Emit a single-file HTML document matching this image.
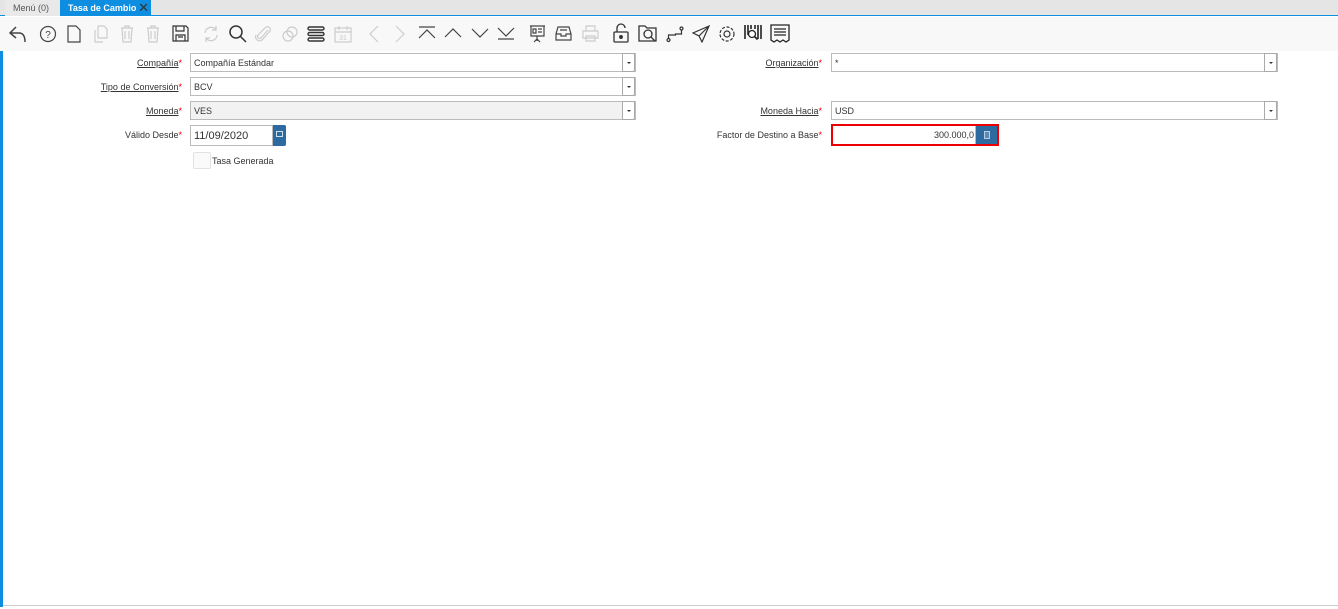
<!DOCTYPE html>
<html><head><meta charset="utf-8"><style>
*{box-sizing:border-box;margin:0;padding:0}
body{width:1338px;height:609px;background:#fff;font-family:"Liberation Sans",sans-serif;font-size:10px;color:#333;position:relative;overflow:hidden}
.tabs{position:absolute;left:0;top:0;width:1338px;height:16px;background:#e5e5e5;border-bottom:1px solid #0d8ee0}
.tab{position:absolute;top:0;height:16px;line-height:16px;font-size:9px;padding:0 8px}
.t1{left:5px;color:#555;background:#e9e9e9;width:55px}
.t2{left:60px;width:91px;background:#0d8ee0;color:#fff;font-weight:bold}
.tb{position:absolute;top:17px;left:0;width:1338px;height:34px;background:#f8f8f8}
.tb svg{position:absolute;top:24px}
.lb{position:absolute;left:0;top:51px;width:3px;height:556px;background:#0d8ee0}
.bot{position:absolute;left:3px;top:605px;width:1335px;height:1px;background:#ccc}
.lab{position:absolute;text-align:right;font-size:9px;color:#333;height:19px;line-height:21px}
.lab u{text-decoration:underline}
.lab i{color:#d00;font-style:normal}
.inp{position:absolute;height:19px;border:1px solid #bbb;background:#fff;font-size:9px;line-height:19px;padding-left:3px}
.dd{position:absolute;right:0;top:-1px;width:13px;height:19px;border:1px solid #aaa;background:#fff;border-radius:0 2px 2px 0}
.dd:after{content:"";position:absolute;left:4px;top:8px;border-left:2px solid transparent;border-right:2px solid transparent;border-top:2px solid #333}
</style></head><body>
<div class="tabs"><div class="tab t1">Menú (0)</div><div class="tab t2">Tasa de Cambio <span style="position:absolute;right:2px;top:0;font-weight:normal;color:#333;font-size:13px">✕</span></div></div>
<div class="tb">
<svg style="left:8px;top:7px" width="20" height="20" viewBox="0 0 20 20" fill="none" stroke="#444" stroke-width="1.5"><path d="M8 3L2 9l6 5M2 9h9c4 0 6 3 6 9"/></svg>
<svg style="left:39px;top:8px" width="18" height="18" viewBox="0 0 18 18" fill="none" stroke="#444" stroke-width="1.2"><circle cx="9" cy="9" r="7.5"/><text x="9" y="13" font-size="10" text-anchor="middle" fill="#444" stroke="none" font-family="Liberation Sans">?</text></svg>
<svg style="left:67px;top:8px" width="14" height="18" viewBox="0 0 14 18" fill="none" stroke="#444" stroke-width="1.2"><path d="M1 1h8l4 4v12H1z"/></svg>
<svg style="left:94px;top:8px" width="14" height="18" viewBox="0 0 14 18" fill="none" stroke="#ccc" stroke-width="1.2"><path d="M4 1h6l3 3v9H4zM1 5v12h8"/></svg>
<svg style="left:120px;top:8px" width="14" height="18" viewBox="0 0 14 18" fill="none" stroke="#ccc" stroke-width="1.2"><path d="M1 3h12M5 3V1h4v2M2 3l1 14h8l1-14M5 6v8M9 6v8"/></svg>
<svg style="left:146px;top:8px" width="14" height="18" viewBox="0 0 14 18" fill="none" stroke="#ccc" stroke-width="1.2"><path d="M1 3h12M5 3V1h4v2M2 3l1 14h8l1-14M5 6v8M9 6v8"/></svg>
<svg style="left:172px;top:8px" width="17" height="17" viewBox="0 0 17 17" fill="none" stroke="#333" stroke-width="1.2"><path d="M1 1h13l2 2v13H1zM4 1v5h8V1M4 16v-6h9v6M6 12h5"/></svg>
<svg style="left:202px;top:8px" width="18" height="18" viewBox="0 0 18 18" fill="none" stroke="#ccc" stroke-width="1.3"><path d="M3 8a6 6 0 0 1 11-3M15 10a6 6 0 0 1-11 3M14 1v4h-4M4 17v-4h4"/></svg>
<svg style="left:228px;top:7px" width="20" height="20" viewBox="0 0 20 20" fill="none" stroke="#333" stroke-width="1.5"><circle cx="8" cy="8" r="6"/><path d="M12.5 12.5L18 18"/></svg>
<svg style="left:255px;top:8px" width="18" height="18" viewBox="0 0 18 18" fill="none" stroke="#ccc" stroke-width="1.2"><path d="M13 5l-7 8a2 2 0 0 1-3-3l8-8a3 3 0 0 1 4 4l-8 9a4 4 0 0 1-6-5"/></svg>
<svg style="left:281px;top:8px" width="18" height="18" viewBox="0 0 18 18" fill="none" stroke="#ccc" stroke-width="1.2"><circle cx="11" cy="7" r="5"/><circle cx="7" cy="11" r="5"/></svg>
<svg style="left:307px;top:9px" width="18" height="16" viewBox="0 0 18 16" fill="none" stroke="#333" stroke-width="1.4"><rect x="1" y="1" width="16" height="3" rx="1.5"/><rect x="1" y="6.5" width="16" height="3" rx="1.5"/><rect x="1" y="12" width="16" height="3" rx="1.5"/></svg>
<svg style="left:334px;top:8px" width="18" height="18" viewBox="0 0 18 18" fill="none" stroke="#ccc" stroke-width="1.2"><rect x="1" y="3" width="16" height="14"/><path d="M1 7h16M5 1v4M13 1v4"/><text x="9" y="15" font-size="7" text-anchor="middle" fill="#ccc" stroke="none">31</text></svg>
<svg style="left:368px;top:8px" width="12" height="18" viewBox="0 0 12 18" fill="none" stroke="#ccc" stroke-width="1.2"><path d="M10 1L2 9l8 8"/></svg>
<svg style="left:394px;top:8px" width="12" height="18" viewBox="0 0 12 18" fill="none" stroke="#ccc" stroke-width="1.2"><path d="M2 1l8 8-8 8"/></svg>
<svg style="left:418px;top:9px" width="18" height="14" viewBox="0 0 18 14" fill="none" stroke="#444" stroke-width="1.2"><path d="M1 1h16M1 12l8-8 8 8"/></svg>
<svg style="left:444px;top:9px" width="18" height="14" viewBox="0 0 18 14" fill="none" stroke="#444" stroke-width="1.2"><path d="M1 11l8-8 8 8"/></svg>
<svg style="left:471px;top:9px" width="18" height="14" viewBox="0 0 18 14" fill="none" stroke="#444" stroke-width="1.2"><path d="M1 3l8 8 8-8"/></svg>
<svg style="left:497px;top:9px" width="18" height="14" viewBox="0 0 18 14" fill="none" stroke="#444" stroke-width="1.2"><path d="M1 2l8 8 8-8M1 13h16"/></svg>
<svg style="left:529px;top:8px" width="17" height="18" viewBox="0 0 17 18" fill="none" stroke="#444" stroke-width="1.2"><path d="M1 1h15M2 1v10h13V1M8 11v5M5 17l3-3 3 3M4 4h3v4H4zM9 4h4M9 7h4"/></svg>
<svg style="left:555px;top:9px" width="17" height="15" viewBox="0 0 17 15" fill="none" stroke="#444" stroke-width="1.2"><path d="M3 1h11l2 7v6H1V8zM1 8h5v2h5V8h5M5 4h7"/></svg>
<svg style="left:582px;top:8px" width="17" height="17" viewBox="0 0 17 17" fill="none" stroke="#ccc" stroke-width="1.2"><path d="M4 6V1h9v5M1 6h15v7H1zM4 11h9v5H4z"/></svg>
<svg style="left:613px;top:6px" width="16" height="20" viewBox="0 0 16 20" fill="none" stroke="#333" stroke-width="1.3"><path d="M4 9V5a4 4 0 0 1 8 0"/><rect x="1" y="9" width="14" height="10" rx="1"/><circle cx="8" cy="14" r="1.3" fill="#333"/></svg>
<svg style="left:638px;top:7px" width="20" height="19" viewBox="0 0 20 19" fill="none" stroke="#333" stroke-width="1.3"><path d="M1 17V2h6l2 2h9v13z"/><circle cx="10" cy="10" r="4"/><path d="M13 13l4 4"/></svg>
<svg style="left:666px;top:9px" width="18" height="17" viewBox="0 0 18 17" fill="none" stroke="#333" stroke-width="1.2"><circle cx="2.5" cy="14" r="1.5"/><circle cx="15.5" cy="2.5" r="1.5"/><path d="M2.5 12.5V9h7v-1h6V4"/></svg>
<svg style="left:692px;top:8px" width="18" height="18" viewBox="0 0 18 18" fill="none" stroke="#333" stroke-width="1.2"><path d="M17 1L1 8l6 3 3 6zM7 11l10-10"/></svg>
<svg style="left:718px;top:8px" width="18" height="18" viewBox="0 0 18 18" fill="none" stroke="#333" stroke-width="1.2"><circle cx="9" cy="9" r="3"/><circle cx="9" cy="9" r="7" stroke-dasharray="3 1.6"/></svg>
<svg style="left:744px;top:7px" width="18" height="19" viewBox="0 0 18 19" fill="none" stroke="#222" stroke-width="1.6"><path d="M1 1v14M4 1v10M7 1v4M11 1v4M14 1v14M17 1v14"/><circle cx="8" cy="10" r="3.5" fill="#fff" stroke-width="1.3"/><path d="M10.5 12.5l3 3"/></svg>
<svg style="left:770px;top:7px" width="20" height="19" viewBox="0 0 20 19" fill="none" stroke="#222" stroke-width="1.3"><path d="M1 1h18v15l-3 2-3-2-3 2-3-2-3 2-3-2z"/><path d="M4 5h12M4 8h12M4 11h12"/></svg>
</div>
<div class="lb"></div><div class="bot"></div>

<div class="lab" style="left:60px;width:122px;top:53px"><u>Compañía</u><i>*</i></div>
<div class="inp" style="left:190px;top:53px;width:446px">Compañía Estándar<div class="dd"></div></div>
<div class="lab" style="left:60px;width:122px;top:77px"><u>Tipo de Conversión</u><i>*</i></div>
<div class="inp" style="left:190px;top:77px;width:446px">BCV<div class="dd"></div></div>
<div class="lab" style="left:60px;width:122px;top:101px"><u>Moneda</u><i>*</i></div>
<div class="inp" style="left:190px;top:101px;width:446px;background:#f2f2f2">VES<div class="dd"></div></div>
<div class="lab" style="left:60px;width:122px;top:125px">Válido Desde<i>*</i></div>
<div class="inp" style="left:190px;top:125px;width:83px;height:21px;font-size:11px;line-height:21px">11/09/2020</div>
<div style="position:absolute;left:273px;top:125px;width:13px;height:21px;background:#2c6aa0;border-radius:0 2px 2px 0"><div style="position:absolute;left:3px;top:6px;width:7px;height:6px;border:1px solid #cde"></div></div>
<div style="position:absolute;left:193px;top:152px;width:18px;height:17px;border:1px solid #e2e2e2;border-radius:2px;background:#fafafa"></div>
<div style="position:absolute;left:212px;top:156px;font-size:9px">Tasa Generada</div>

<div class="lab" style="left:700px;width:122px;top:53px"><u>Organización</u><i>*</i></div>
<div class="inp" style="left:831px;top:53px;width:447px">*<div class="dd"></div></div>
<div class="lab" style="left:700px;width:122px;top:101px"><u>Moneda Hacia</u><i>*</i></div>
<div class="inp" style="left:831px;top:101px;width:447px">USD<div class="dd"></div></div>
<div class="lab" style="left:650px;width:172px;top:125px">Factor de Destino a Base<i>*</i></div>
<div style="position:absolute;left:831px;top:124px;width:168px;height:22px;border:2px solid #e00;background:#fff">
<div style="position:absolute;left:0;top:0;width:143px;height:18px;text-align:right;line-height:19px;font-size:9px;padding-right:1px;border-right:1px solid #bbb">300.000,0</div>
<div style="position:absolute;right:0;top:0;width:21px;height:18px;background:#2c6aa0"><div style="position:absolute;left:8px;top:5px;width:6px;height:8px;border:1px solid #bcd;background:#5a8ab8"></div></div>
</div>
</body></html>
